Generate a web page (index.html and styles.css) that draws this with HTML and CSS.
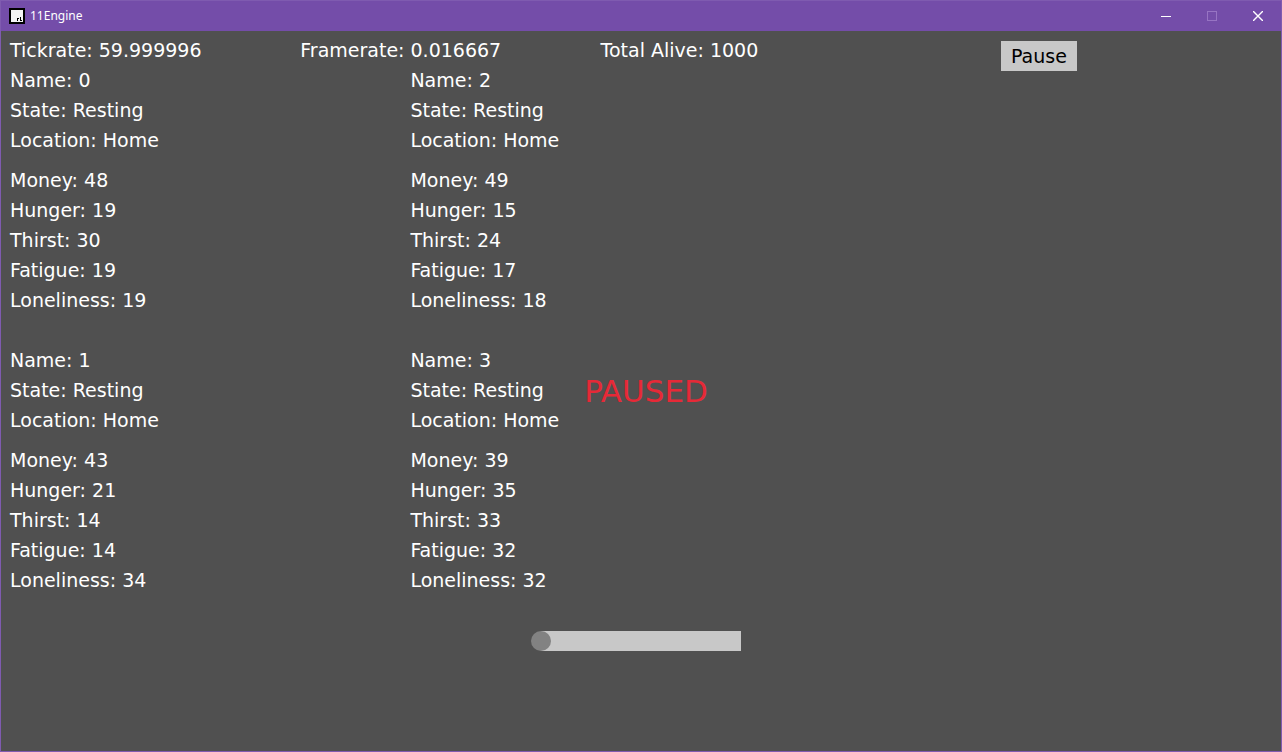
FILE: index.html
```html
<!DOCTYPE html>
<html lang="en">
<head>
<meta charset="utf-8">
<title>11Engine</title>
<link rel="stylesheet" href="styles.css">
</head>
<body>
<div class="window">
  <header class="titlebar">
    <svg class="app-icon" width="16" height="16" viewBox="0 0 16 16" shape-rendering="crispEdges" aria-hidden="true">
      <rect width="16" height="16" fill="#000"/>
      <rect x="2" y="2" width="12" height="12" fill="#f5f5f5"/>
      <path d="M8 10h2v1H9v2H8zM11 9h1v3h1v1h-2z" fill="#000"/>
    </svg>
    <h1 class="title">11Engine</h1>
    <div class="controls">
      <button class="control" type="button" aria-label="Minimize">
        <svg width="10" height="10" viewBox="0 0 10 10" shape-rendering="crispEdges"><rect y="5" width="10" height="1" fill="#fff"/></svg>
      </button>
      <button class="control" type="button" aria-label="Maximize" disabled>
        <svg width="10" height="10" viewBox="0 0 10 10"><rect x=".5" y=".5" width="9" height="9" fill="none" stroke="#9774c3"/></svg>
      </button>
      <button class="control" type="button" aria-label="Close">
        <svg width="10" height="10" viewBox="0 0 10 10"><path d="M0 0L10 10M10 0L0 10" stroke="#fff" stroke-width="1.400"/></svg>
      </button>
    </div>
  </header>
  <main class="stage">
    <div class="board">
      <div class="stats">
        <div class="summary">
          <p>Tickrate: 59.999996</p>
          <p>Framerate: 0.016667</p>
          <p>Total Alive: 1000</p>
        </div>
        <div class="agents">
          <section class="agent">
            <div><p>Name: 0</p><p>State: Resting</p><p>Location: Home</p></div>
            <div><p>Money: 48</p><p>Hunger: 19</p><p>Thirst: 30</p><p>Fatigue: 19</p><p>Loneliness: 19</p></div>
          </section>
          <section class="agent">
            <div><p>Name: 2</p><p>State: Resting</p><p>Location: Home</p></div>
            <div><p>Money: 49</p><p>Hunger: 15</p><p>Thirst: 24</p><p>Fatigue: 17</p><p>Loneliness: 18</p></div>
          </section>
          <section class="agent">
            <div><p>Name: 1</p><p>State: Resting</p><p>Location: Home</p></div>
            <div><p>Money: 43</p><p>Hunger: 21</p><p>Thirst: 14</p><p>Fatigue: 14</p><p>Loneliness: 34</p></div>
          </section>
          <section class="agent">
            <div><p>Name: 3</p><p>State: Resting</p><p>Location: Home</p></div>
            <div><p>Money: 39</p><p>Hunger: 35</p><p>Thirst: 33</p><p>Fatigue: 32</p><p>Loneliness: 32</p></div>
          </section>
        </div>
      </div>
      <div class="actions"><button class="pause" type="button">Pause</button></div>
    </div>
    <input class="speed" type="range" min="0" max="100" value="0" aria-label="Speed">
    <p class="paused">PAUSED</p>
  </main>
</div>
</body>
</html>
```
FILE: styles.css
```css
* {
  box-sizing: border-box;
}

body,
p,
h1 {
  margin: 0;
}

.window {
  display: flex;
  flex-direction: column;
  min-height: 100vh;
  border: 1px solid #7f5bb0;
  background: #505050;
}

.titlebar {
  display: flex;
  align-items: center;
  height: 30px;
  padding-left: 8px;
  background: #744da9;
}

.title {
  margin-left: 5px;
  color: #fff;
  font: 400 12px/16px "Noto Sans", "Open Sans", sans-serif;
}

.controls {
  display: flex;
  align-self: stretch;
  margin-left: auto;
}

.control {
  display: grid;
  place-items: center;
  width: 46px;
  padding: 0;
  border: 0;
  background: none;
}

.stage {
  position: relative;
  flex: 1;
  display: flex;
  flex-direction: column;
  color: #fff;
  font: 19px/30px "DejaVu Sans", sans-serif;
}

.board {
  display: grid;
  grid-template-columns: 100fr 28fr;
}

.stats {
  padding: 4px 0 0 9px;
}

.summary {
  display: grid;
  grid-template-columns: 29fr 30fr 40fr;
}

.agents {
  display: grid;
  grid-template-columns: 40fr 59fr;
  row-gap: 30px;
}

.agent {
  display: grid;
  row-gap: 10px;
}

.actions {
  padding-top: 10px;
}

.pause {
  display: block;
  height: 30px;
  padding: 0 10px;
  border: 0;
  background: #c8c8c8;
  color: #000;
  font: inherit;
}

.speed {
  appearance: none;
  align-self: center;
  width: 220px;
  height: 20px;
  margin: 36px 0 20px;
  background: linear-gradient(#c8c8c8, #c8c8c8) center / 200px 20px no-repeat;
}

.speed::-webkit-slider-thumb {
  appearance: none;
  width: 20px;
  height: 20px;
  border-radius: 50%;
  background: #828282;
}

.paused {
  position: absolute;
  top: 50%;
  left: 50%;
  padding-left: 10px;
  transform: translate(-50%, -50%);
  color: #e62937;
  font-size: 31px;
}
```
